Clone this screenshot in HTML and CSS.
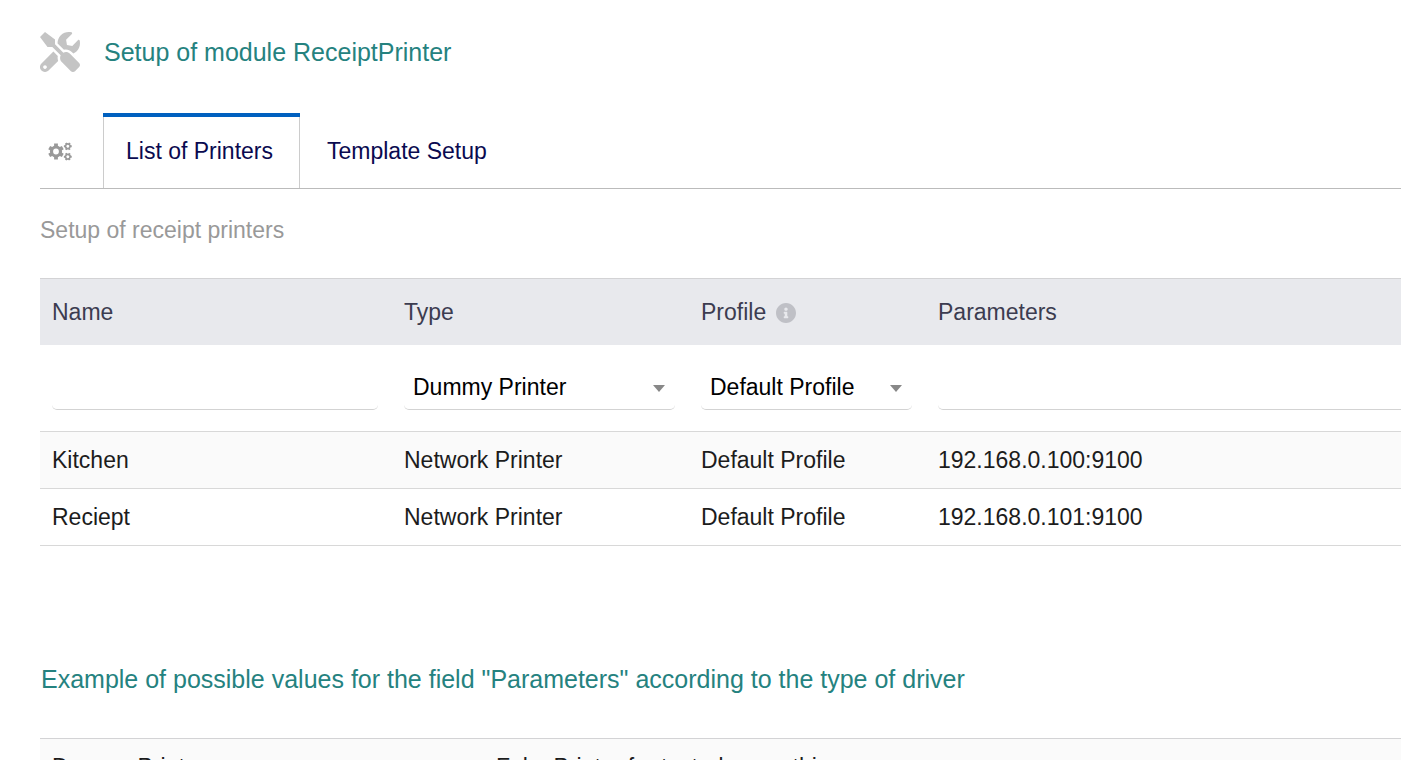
FILE: index.html
```html
<!DOCTYPE html>
<html lang="en">
<head>
  <meta charset="UTF-8" />
  <meta name="viewport" content="width=device-width, initial-scale=1.0" />
  <title>Setup of module ReceiptPrinter</title>
  <link rel="stylesheet" href="styles.css">
</head>
<body>
  <main class="page">
    <header class="title">
      <svg class="title-icon" viewBox="0 0 512 512" aria-hidden="true">
        <path d="M501.1 395.7L384 278.6c-23.1-23.1-57.6-27.6-85.4-13.9L192 158.1V96L64 0 0 64l96 128h62.1l106.6 106.6c-13.6 27.8-9.2 62.3 13.9 85.4l117.1 117.1c14.6 14.6 38.2 14.6 52.7 0l52.7-52.7c14.5-14.6 14.5-38.2 0-52.7zM331.7 225c28.3 0 54.9 11 74.9 31l19.4 19.4c15.8-6.9 30.8-16.5 43.8-29.5 37.1-37.1 49.7-89.3 37.9-136.7-2.2-9-13.5-12.1-20.1-5.5l-74.4 74.4-67.9-11.3L334 98.9l74.4-74.4c6.6-6.6 3.4-17.9-5.7-20.2-47.4-11.7-99.6.9-136.6 37.9-28.5 28.5-41.9 66.1-41.2 103.6l82.1 82.1c8.1-1.9 16.5-2.9 24.7-2.9zm-103.9 82l-56.7-56.7L18.7 402.8c-25 25-25 65.5 0 90.5s65.5 25 90.5 0l123.6-123.6c-7.6-19.9-9.9-41.6-5-62.7zM64 472c-13.2 0-24-10.8-24-24 0-13.3 10.7-24 24-24s24 10.7 24 24c0 13.2-10.7 24-24 24z"/>
      </svg>
      <h1>Setup of module ReceiptPrinter</h1>
    </header>

    <nav class="tabs">
      <svg class="tabs-icon" viewBox="0 0 24 20" aria-hidden="true">
        <defs>
          <g id="gear">
            <circle r="4.5" fill="none" stroke-width="3.2"/>
            <path d="M0-7.9V-5M0 7.9V5M-6.8-3.9L-4.3-2.5M6.8 3.9L4.3 2.5M6.8-3.9L4.3-2.5M-6.8 3.9L-4.3 2.5" fill="none" stroke-width="3.8"/>
          </g>
        </defs>
        <use href="#gear" x="8" y="10.5"/>
        <use href="#gear" transform="translate(19.8 5.3) rotate(30) scale(.5)"/>
        <use href="#gear" transform="translate(19.8 15.7) rotate(30) scale(.5)"/>
      </svg>
      <a class="tab active" href="#printers">List of Printers</a>
      <a class="tab" href="#template">Template Setup</a>
    </nav>

    <p class="description">Setup of receipt printers</p>

    <form id="printers">
      <table class="list printers">
        <colgroup>
          <col class="col-name">
          <col class="col-type">
          <col class="col-profile">
          <col>
        </colgroup>
        <thead>
          <tr>
            <th>Name</th>
            <th>Type</th>
            <th>
              <span class="with-info">Profile
                <svg class="info" viewBox="8 8 496 496" aria-hidden="true">
                  <path d="M256 8C119.043 8 8 119.083 8 256c0 136.997 111.043 248 248 248s248-111.003 248-248C504 119.083 392.957 8 256 8zm0 110c23.196 0 42 18.804 42 42s-18.804 42-42 42-42-18.804-42-42 18.804-42 42-42zm56 254c0 6.627-5.373 12-12 12h-88c-6.627 0-12-5.373-12-12v-24c0-6.627 5.373-12 12-12h12v-64h-12c-6.627 0-12-5.373-12-12v-24c0-6.627 5.373-12 12-12h64c6.627 0 12 5.373 12 12v100h12c6.627 0 12 5.373 12 12v24z"/>
                </svg>
              </span>
            </th>
            <th>Parameters</th>
          </tr>
        </thead>
        <tbody>
          <tr class="new-printer">
            <td><input class="field" type="text" name="printername" aria-label="Name"></td>
            <td>
              <div class="select">
                <select class="field" name="printertypeid" aria-label="Type">
                  <option>Dummy Printer</option>
                  <option>Network Printer</option>
                </select>
              </div>
            </td>
            <td>
              <div class="select">
                <select class="field" name="printerprofileid" aria-label="Profile">
                  <option>Default Profile</option>
                </select>
              </div>
            </td>
            <td class="last"><input class="field" type="text" name="parameter" aria-label="Parameters"></td>
          </tr>
          <tr class="odd">
            <td>Kitchen</td>
            <td>Network Printer</td>
            <td>Default Profile</td>
            <td>192.168.0.100:9100</td>
          </tr>
          <tr>
            <td>Reciept</td>
            <td>Network Printer</td>
            <td>Default Profile</td>
            <td>192.168.0.101:9100</td>
          </tr>
        </tbody>
      </table>
    </form>

    <h2>Example of possible values for the field "Parameters" according to the type of driver</h2>

    <table class="list examples">
      <colgroup>
        <col class="col-driver">
        <col>
      </colgroup>
      <tbody>
        <tr class="odd">
          <td>Dummy Printer</td>
          <td>Fake Printer for test, does nothing</td>
        </tr>
      </tbody>
    </table>
  </main>
</body>
</html>
```

FILE: styles.css
```css
* {
  box-sizing: border-box;
}

body {
  margin: 0;
  height: 100vh;
  overflow: hidden;
  background-color: #fff;
  color: #1c1c1c;
  font-family: "Liberation Sans", Arial, sans-serif;
  font-size: 23px;
  line-height: 28px;
}

.page {
  padding: 32px 0 0 40px;
}

h1,
h2 {
  margin: 0;
  color: #25827f;
  font-size: 25px;
  font-weight: normal;
  line-height: 32px;
}

.title {
  display: flex;
  align-items: center;
  gap: 24px;
  margin-bottom: 41px;
}

.title-icon {
  width: 40px;
  height: 40px;
  fill: #c4c4c4;
}

/* Tabs */
.tabs {
  display: flex;
  align-items: center;
  border-bottom: 1px solid #bbb;
}

.tabs-icon {
  width: 24px;
  height: 20px;
  margin: 0 31px 0 8px;
  stroke: #999;
}

.tab {
  padding: 20px 27px 23px;
  border-top: 4px solid transparent;
  color: #0a0a50;
  text-decoration: none;
}

.tab.active {
  padding-left: 23px;
  border-top-color: #0060bf;
  box-shadow: inset 1px 0 #ccc, inset -1px 0 #ccc;
}

.description {
  margin: 27px 0 34px;
  color: #999;
}

/* Tables */
.list {
  width: 100%;
  table-layout: fixed;
  border-collapse: separate;
  border-spacing: 0;
  border-top: 1px solid #d3d3d5;
}

.list th,
.list td {
  padding: 14px 12px;
  border-bottom: 1px solid #d8d8d8;
  text-align: left;
}

.list th {
  padding: 19px 12px;
  border-bottom: none;
  background-color: #e8e9ed;
  color: #3c3c50;
  font-weight: normal;
}

.list .odd td {
  background-color: #fafafa;
}

.col-name {
  width: 352px;
}

.col-type {
  width: 297px;
}

.col-profile {
  width: 237px;
}

.col-driver {
  width: 444px;
}

.with-info {
  display: flex;
  align-items: center;
  gap: 10px;
}

.info {
  width: 20px;
  height: 20px;
  margin-top: 2px;
  fill: #bfc0c6;
}

/* Form row */
.list .new-printer td {
  padding: 20px 14px 21px 12px;
}

.list .new-printer .last {
  padding-right: 0;
}

.field {
  display: block;
  width: 100%;
  height: 45px;
  padding: 0 9px;
  border: none;
  border-bottom: 1px solid #d3d3d3;
  border-radius: 5px;
  background-color: transparent;
  color: #000;
  font: inherit;
  appearance: none;
}

.last .field {
  border-bottom-right-radius: 0;
}

.select {
  position: relative;
}

.select::after {
  content: "";
  position: absolute;
  top: 20px;
  right: 10px;
  border: 6px solid transparent;
  border-top: 7px solid #888;
  border-bottom: none;
  pointer-events: none;
}

h2 {
  margin: 117px 0 43px 1px;
}
```
